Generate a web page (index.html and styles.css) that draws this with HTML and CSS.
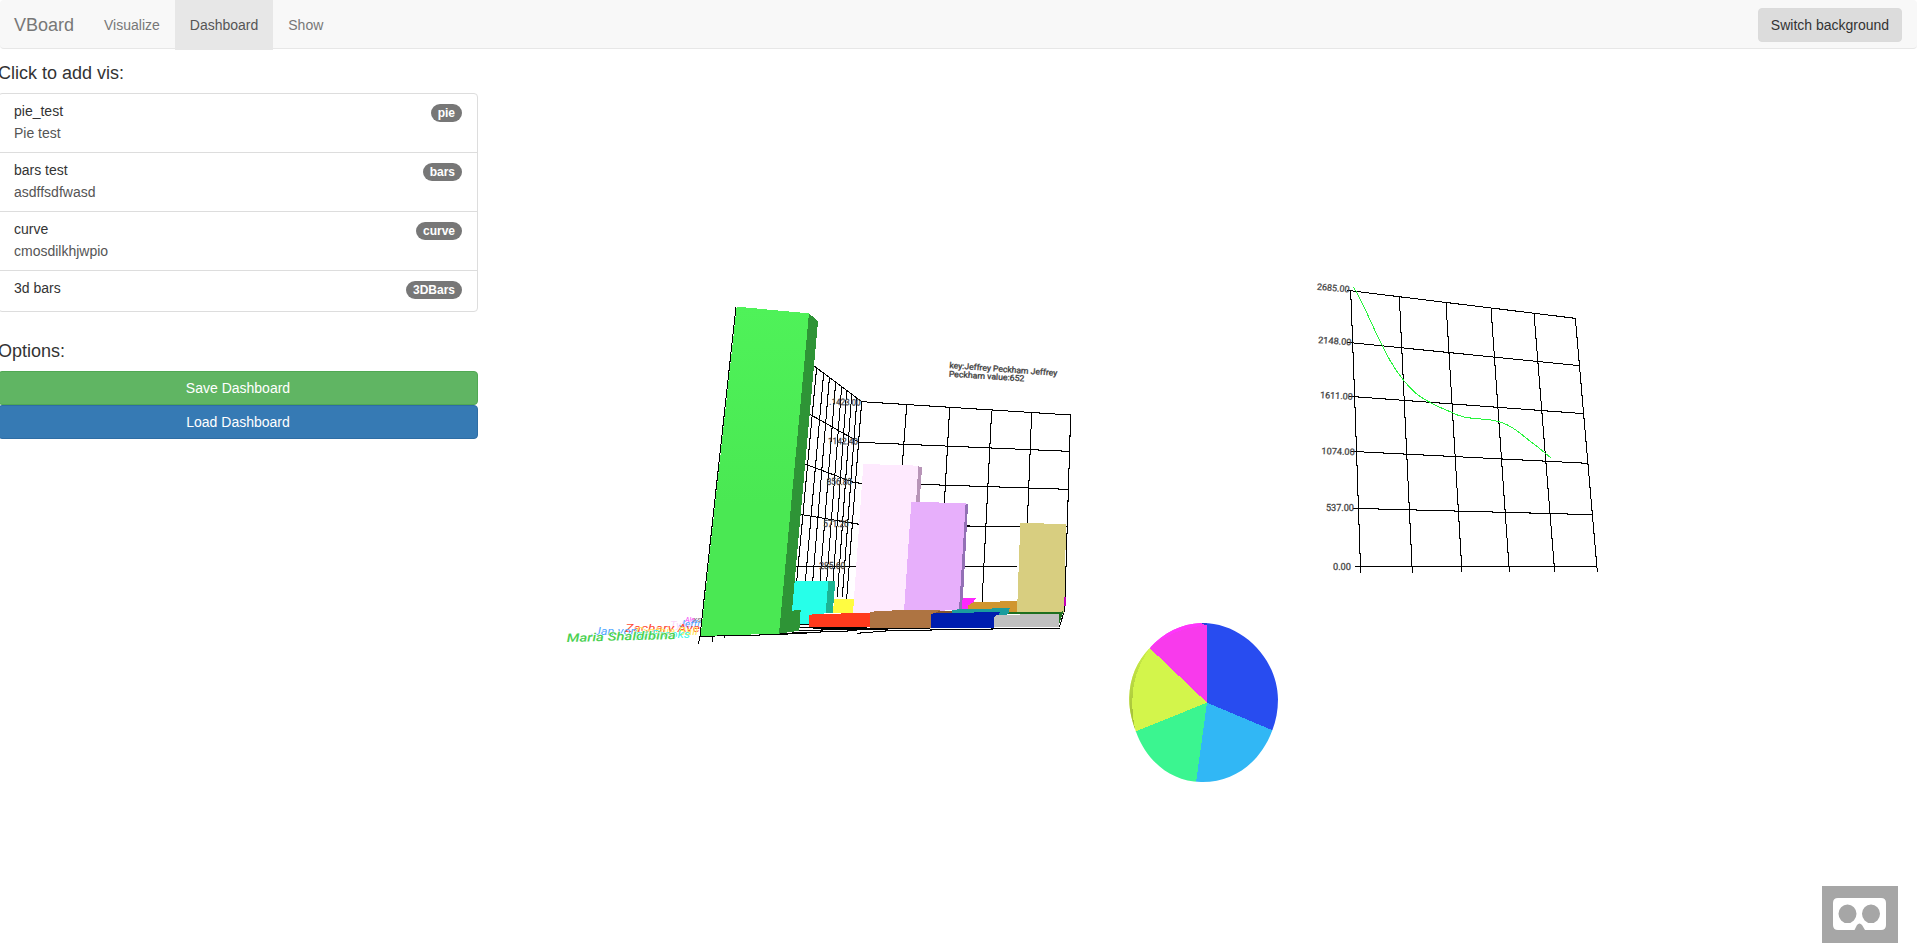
FILE: index.html
```
<!DOCTYPE html>
<html lang="en">
<head>
<meta charset="utf-8">
<title>VBoard</title>
<link rel="stylesheet" href="styles.css">
</head>
<body>
<svg class="scene" viewBox="0 0 1917 948" shape-rendering="crispEdges">
  <!-- 3D bars: grid walls -->
  <g class="grid" transform="translate(780 350) scale(.33333)">
    <path d="M110 52L50 695M131 70L76 695M148 85L98 695M167 97L120 695M185 110L140 695M200 122L156 740M215 134L172 740M231 145L187 740M245 155L200 746"/>
    <path d="M102 48L245 155L872 195M88 192L238 277L868 304M75 342L220 397L250 401M420 403L865 418M60 493L238 523M560 528L860 531M48 649L228 649M550 649L712 649"/>
    <path d="M380 166L367 345M509 174L493 460M635 182L606 760M755 188L742 520M872 195L854 780L838 832"/>
    <path d="M50 823H180M50 834L330 830M-15 851L230 842M0 842L450 835M100 837L840 828M230 850L330 842L640 837L840 836M-240 859L-60 855L80 850"/>
    <path d="M-132 -130L-240 859M-240 859L-245 882M-203 859V875M-167 857V864" />
  </g>
  <g class="tick" transform="translate(780 350) scale(.33333)">
    <text x="148" y="164" textLength="94" lengthAdjust="spacingAndGlyphs" transform="rotate(2 148 164)">.1423.00</text>
    <text x="144" y="282" textLength="90" lengthAdjust="spacingAndGlyphs" transform="rotate(1 144 282)">1142.40</text>
    <text x="140" y="405" textLength="76" lengthAdjust="spacingAndGlyphs">856.80</text>
    <text x="130" y="530" textLength="76" lengthAdjust="spacingAndGlyphs">571.20</text>
    <text x="118" y="657" textLength="78" lengthAdjust="spacingAndGlyphs">285.60</text>
  </g>
  <!-- 3D bars: names along the depth axis -->
  <g class="names" transform="translate(560 605) scale(.33333)">
    <text x="376" y="50" fill="#f33af3" textLength="28" lengthAdjust="spacingAndGlyphs" font-size="24">Ale</text>
    <text x="400" y="50" fill="#776677" textLength="24" lengthAdjust="spacingAndGlyphs" font-size="24">xs</text>
    <text x="330" y="70" fill="#fbd5fb" textLength="70" lengthAdjust="spacingAndGlyphs" font-size="26">Tyler</text>
    <text x="358" y="66" fill="#4aa0ff" textLength="64" lengthAdjust="spacingAndGlyphs" font-size="26">Jeffr</text>
    <text x="196" y="82" fill="#ff4b35" textLength="224" lengthAdjust="spacingAndGlyphs">Zachary Ave</text>
    <text x="228" y="91" fill="#ffe95c" textLength="186" lengthAdjust="spacingAndGlyphs">Cynthia Ball</text>
    <text x="92" y="90" fill="#55a7ff" textLength="140" lengthAdjust="spacingAndGlyphs">.Jan von</text>
    <text x="226" y="98" fill="#3ff5ea" textLength="164" lengthAdjust="spacingAndGlyphs">ge Brooks</text>
    <text class="front" x="20" y="111" fill="#4bd153" textLength="328" lengthAdjust="spacingAndGlyphs" transform="rotate(-1.6 20 111)">Maria Shaldibina</text>
  </g>
  <!-- 3D bars: solids -->
  <g transform="translate(780 460) scale(.33333)">
    <path fill="#27ffe9" d="M42 363H145L137 460L90 464L86 492H55L35 452Z"/>
    <path fill="#1cb493" d="M145 363H166L158 460H137Z"/>
    <path fill="#fffc41" d="M163 418H222L219 460H158Z"/>
    <path fill="#b895b8" d="M415 18L426 23L419 126H408Z"/>
    <path fill="#feeafe" d="M250 12L415 17L408 130L372 460H219Z"/>
    <path fill="#9370b5" d="M557 129L564 134L547 447L536 447Z"/>
    <path fill="#e7affb" d="M394 126L557 129L537 450L372 456Z"/>
    <path fill="#ff27ff" d="M548 414H588L578 430L563 447H546Z"/>
    <path fill="#d0962f" d="M580 427L711 423V457H650L563 450V437Z"/>
    <path fill="#d8ce80" d="M721 189L858 192L853 458H711Z"/>
    <path fill="#c200b5" d="M853 410H857V438H852Z"/>
    <path fill="#1e701f" d="M684 457H836L850 453L838 490L830 463H680Z"/>
    <path fill="#1a9c9e" d="M516 449L690 444L684 463L620 475L516 458Z"/>
    <path fill="#84552f" d="M470 450L483 454L516 453V459L454 465Z"/>
    <path fill="#ff3a1d" d="M98 463L270 458V501H86L88 465Z"/>
    <path fill="#ae7442" d="M285 454L388 449L482 450L460 462L454 503H269V457Z"/>
    <path fill="#001daf" d="M460 460L660 456L654 468L642 503H454V462Z"/>
    <path fill="#c0c0c0" d="M650 465L838 461V501H642V472Z"/>
    <path fill="#2e9436" d="M87 -440L114 -416L36 452L62 450L58 512L-3 521Z"/>
    <path fill="url(#greenFace)" d="M-130 -460L87 -440L-3 521L-238 528Z"/>
  </g>
  <g class="caption" transform="translate(780 350) scale(.33333)">
    <text x="508" y="54" textLength="324" lengthAdjust="spacingAndGlyphs" transform="rotate(4.2 508 54)">key:Jeffrey Peckham Jeffrey</text>
    <text x="506" y="80" textLength="227" lengthAdjust="spacingAndGlyphs" transform="rotate(3.6 506 80)">Peckham value:652</text>
  </g>
  <!-- Curve -->
  <g transform="translate(1290 270) scale(.33333)">
    <path class="grid" d="M182 62L188 219L194 380L212 908M328 80L367 908M468 98L516 905M603 113L658 905M732 130L794 905M856 145L922 905"/>
    <path class="grid" d="M170 60L188 63L856 145M172 217L868 287M178 379L881 431M182 544L895 580M190 715L908 734M196 889H922"/>
    <path class="curve" d="M190 52C208 72 242 158 278 230C310 295 335 330 370 363C400 391 440 409 487 428C525 448 550 443 602 450C660 457 690 491 725 517C750 535 765 550 782 563"/>
    <g class="tick">
      <text x="80" y="59" textLength="98" lengthAdjust="spacingAndGlyphs" transform="rotate(5 80 59)">2685.00</text>
      <text x="84" y="219" textLength="100" lengthAdjust="spacingAndGlyphs" transform="rotate(4 84 219)">2148.00</text>
      <text x="90" y="384" textLength="98" lengthAdjust="spacingAndGlyphs" transform="rotate(3 90 384)">1611.00</text>
      <text x="94" y="552" textLength="100" lengthAdjust="spacingAndGlyphs" transform="rotate(2 94 552)">1074.00</text>
      <text x="108" y="724" textLength="84" lengthAdjust="spacingAndGlyphs">537.00</text>
      <text x="129" y="900" textLength="54" lengthAdjust="spacingAndGlyphs">0.00</text>
    </g>
  </g>
  <!-- Pie -->
  <g transform="translate(1110 610) scale(.33333)">
    <clipPath id="disc"><path d="M273 39C395 36 503 145 504 268C504 302 498 333 487 361C452 454 375 518 273 516C178 514 109 450 78 365C66 333 57 300 58 262C59 203 81 154 120 113C160 69 215 41 273 39Z"/></clipPath>
    <g clip-path="url(#disc)">
      <path fill="#284cf0" d="M291 278V47L273 39V20H540V383Z"/>
      <path fill="#31b7f5" d="M291 278L540 383V540H255Z"/>
      <path fill="#3bf590" d="M291 278L255 540H20V387Z"/>
      <path fill="#d3f54b" d="M291 278L20 387V14Z"/>
      <path fill="#f83aec" d="M291 278L20 20H273V39L291 47Z"/>
      <path fill="url(#rim)" d="M120 113C76 177 65 230 67 290C68 318 72 344 77 365L40 365V100Z"/>
      <path fill="#ff35fb" d="M120 113C165 74 220 53 276 47V20H100Z"/>
      <path fill="#2543d8" d="M273 39L291 47V38Z"/>
    </g>
  </g>
  <defs>
    <linearGradient id="greenFace" x1="0" y1="0" x2="0" y2="1"><stop offset="0" stop-color="#4ff259"/><stop offset=".6" stop-color="#4ae853"/><stop offset="1" stop-color="#4ae853"/></linearGradient>
    <linearGradient id="rim" x1="0" y1="0" x2="0" y2="1"><stop offset="0" stop-color="#cdf04a"/><stop offset="1" stop-color="#9fb936"/></linearGradient>
  </defs>
</svg>

<nav class="navbar">
  <a class="brand">VBoard</a>
  <a class="nav-link">Visualize</a>
  <a class="nav-link active">Dashboard</a>
  <a class="nav-link">Show</a>
  <button class="switch">Switch background</button>
</nav>
<aside class="sidebar">
  <h4>Click to add vis:</h4>
  <div class="list">
    <a class="item"><span class="badge">pie</span><span class="name">pie_test</span><p>Pie test</p></a>
    <a class="item"><span class="badge">bars</span><span class="name">bars test</span><p>asdffsdfwasd</p></a>
    <a class="item"><span class="badge">curve</span><span class="name">curve</span><p>cmosdilkhjwpio</p></a>
    <a class="item last"><span class="badge">3DBars</span><span class="name">3d bars</span></a>
  </div>
  <h4>Options:</h4>
  <button class="btn save">Save Dashboard</button>
  <button class="btn load">Load Dashboard</button>
</aside>
<button class="vr" aria-label="VR">
  <svg width="76" height="57" viewBox="0 0 76 57"><path fill="#fff" fill-rule="evenodd" d="M16 12H59Q64 12 64 17V39Q64 44 59 44H43L40 39Q37.500 36 35 39L32.500 44H16Q11 44 11 39V17Q11 12 16 12ZM25.500 18.500A9 9.300 0 1 0 25.500 37.100A9 9.300 0 1 0 25.500 18.500ZM49 18.500A9 9.300 0 1 0 49 37.100A9 9.300 0 1 0 49 18.500Z"/></svg>
</button>
</body>
</html>
```
FILE: styles.css
```
* { box-sizing: border-box; }
body {
  margin: 0;
  height: 948px;
  overflow: hidden;
  position: relative;
  background: #fff;
  color: #333;
  font: 14px/20px "Liberation Sans", Arial, sans-serif;
}
button { font: inherit; }
.navbar {
  display: flex;
  align-items: flex-start;
  height: 49px;
  padding-right: 15px;
  background: #f8f8f8;
  border-bottom: 1px solid #e7e7e7;
  border-radius: 4px;
  position: relative;
}
.brand { padding: 15px 15px 15px 14px; font-size: 18px; color: #777; width: 89px; }
.nav-link { padding: 15px; height: 50px; color: #777; }
.nav-link.active { background: #e7e7e7; color: #555; }
.switch {
  margin: 8px 0 0 auto;
  width: 144px;
  height: 34px;
  padding: 0;
  border: 1px solid #dbdbdb;
  border-radius: 4px;
  background: #dcdcdc;
  color: #333;
}
.sidebar { width: 480px; margin-left: -2px; padding-top: 14px; position: relative; }
.sidebar h4 { margin: 0 0 10px; font-size: 18px; font-weight: 400; line-height: 20px; }
.list { margin-bottom: 29px; border: 1px solid #ddd; border-radius: 4px; }
.item { display: block; height: 59px; padding: 7px 15px 0; border-bottom: 1px solid #ddd; }
.item.last { height: 40px; border-bottom: 0; }
.name { color: #333; }
.item p { margin: 2px 0 0; color: #555; }
.badge {
  float: right;
  margin-top: 3px;
  padding: 3px 7px;
  border-radius: 10px;
  background: #777;
  color: #fff;
  font-size: 12px;
  font-weight: 700;
  line-height: 12px;
}
.btn { display: block; width: 100%; height: 34px; padding: 0; border-radius: 4px; color: #fff; }
.save { background: #60b563; border: 1px solid #50a853; }
.load { background: #367ab4; border: 1px solid #2e6da4; }
.scene { position: absolute; left: 0; top: 0; width: 1917px; height: 948px; }
.grid { fill: none; stroke: #000; stroke-width: 3.1; }
.curve { fill: none; stroke: #27f53c; stroke-width: 3.1; }
.tick, .caption, .names { font-family: Roboto, sans-serif; }
.tick { font-size: 27px; fill: #444; stroke: #444; stroke-width: .8; }
.caption { font-size: 25px; fill: #444; stroke: #444; stroke-width: 1; }
.names { font-size: 31px; font-style: italic; }
.front { stroke: #fff; stroke-width: 3; paint-order: stroke; font-size: 35px; font-weight: 500; }
.vr {
  position: absolute;
  left: 1822px;
  top: 886px;
  width: 76px;
  height: 57px;
  padding: 0;
  border: 0;
  background: #a6a6a6;
}
.vr svg { display: block; }
```
